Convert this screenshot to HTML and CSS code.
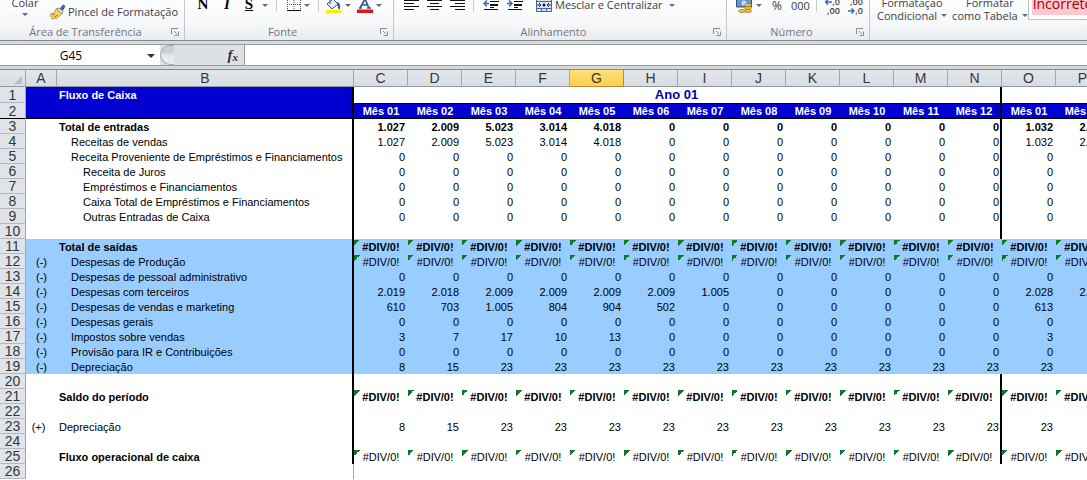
FILE: index.html
```html
<!DOCTYPE html>
<html lang="pt-BR">
<head>
<meta charset="utf-8">
<title>Fluxo de Caixa</title>
<link rel="stylesheet" href="styles.css">
</head>
<body>
<header class="ribbon">
  <section class="group clipboard">
    <div class="tools">
      <button class="stack paste">Colar<i class="arrow"></i></button>
      <button class="tool painter">
        <svg width="16" height="16" viewBox="0 0 16 16"><path d="M10 5l3-4 2 1-2 4z" fill="#4a62b0" stroke="#2c3c80" stroke-width=".7"/><path d="M6 5l3-1 4 3-1 3z" fill="#e8e4d8" stroke="#777" stroke-width=".8"/><path d="M6 5l6 5-5 4-5 1-2-5 4-1z" fill="#f5d76a" stroke="#b98a24" stroke-width=".8"/><path d="M2 11l3-1m-1 3l4-2" stroke="#a87a1c" fill="none"/></svg>
        Pincel de Formatação</button>
    </div>
    <div class="caption"><h2>Área de Transferência</h2><button class="launch" aria-label="Área de Transferência"><svg width="8" height="8" viewBox="0 0 8 8"><path d="M.5 6V.5H7M3 3l3 3M7.500 3.500v4h-4" fill="none" stroke="#848b95"/></svg></button></div>
  </section>
  <section class="group font">
    <div class="tools">
      <button class="glyph bold">N</button>
      <button class="glyph italic">I</button>
      <button class="glyph under">S</button><i class="arrow"></i>
      <i class="rule first"></i>
      <button class="tool" aria-label="Bordas"><svg width="14" height="12" viewBox="0 0 14 12"><path d="M.5 0v10M7 0v10M13.500 0v10M0 4.500h14" stroke="#555" stroke-dasharray="1 1" fill="none"/><path d="M0 10.500h14" stroke="#111"/></svg></button><i class="arrow"></i>
      <i class="rule"></i>
      <button class="tool" aria-label="Cor de preenchimento"><svg width="17" height="14" viewBox="0 0 17 14"><path d="M2 4l6-5 5 5-6 5z" fill="#e7edf8" stroke="#40567f"/><path d="M5 0v4" stroke="#40567f"/><path d="M12 2q4 1 3 7-1 1-2-1z" fill="#2d5cae"/><path d="M1 10h15v3H1z" fill="#ffee00"/></svg></button><i class="arrow"></i>
      <button class="tool" aria-label="Cor da fonte"><svg width="16" height="14" viewBox="0 0 16 14"><path d="M3 8l5-9 4 9M5 5h6M2 8h3M10 8h4" fill="none" stroke="#36558f" stroke-width="1.700"/><path d="M0 9.500h16V13H0z" fill="#e3121b"/></svg></button><i class="arrow"></i>
    </div>
    <div class="caption"><h2>Fonte</h2><button class="launch" aria-label="Fonte"><svg width="8" height="8" viewBox="0 0 8 8"><path d="M.5 6V.5H7M3 3l3 3M7.500 3.500v4h-4" fill="none" stroke="#848b95"/></svg></button></div>
  </section>
  <section class="group align">
    <div class="tools">
      <button class="tool" aria-label="Alinhar à esquerda"><svg width="15" height="12" viewBox="0 0 15 12"><path d="M0 .5h15M0 3.500h10M0 6.500h15M0 9.500h10" stroke="#111"/></svg></button>
      <button class="tool" aria-label="Centralizar"><svg width="15" height="12" viewBox="0 0 15 12"><path d="M0 .5h15M3 3.500h9M0 6.500h15M3 9.500h9" stroke="#111"/></svg></button>
      <button class="tool" aria-label="Alinhar à direita"><svg width="15" height="12" viewBox="0 0 15 12"><path d="M0 .5h15M5 3.500h10M0 6.500h15M5 9.500h10" stroke="#111"/></svg></button>
      <i class="rule"></i>
      <button class="tool" aria-label="Diminuir recuo"><svg width="16" height="12" viewBox="0 0 16 12"><path d="M7 1.500h9M7 4.500h8M7 5.500h8M7 7.500h4M1 9.500h14" stroke="#111"/><path d="M1 3.500h5M4 .5l-3 3 3 3" stroke="#3a68b0" stroke-width="1.500" fill="none"/></svg></button>
      <button class="tool" aria-label="Aumentar recuo"><svg width="16" height="12" viewBox="0 0 16 12"><path d="M7 1.500h9M7 4.500h8M7 5.500h8M7 7.500h4M1 9.500h14" stroke="#111"/><path d="M0 3.500h5M2 .5l3 3-3 3" stroke="#3a68b0" stroke-width="1.500" fill="none"/></svg></button>
      <button class="tool merge">
        <svg width="16" height="14" viewBox="0 0 16 14"><path d="M.5-3h15v14.500H.5z" fill="#dce6f5" stroke="#48629a"/><path d="M.5 1.500h15M.5 8.500h15M5.500 8.500v3M10.500 8.500v3" stroke="#48629a"/><path d="M1 5h4M11 5h4M3 3l2 2-2 2M13 3l-2 2 2 2" stroke="#1c2f60" fill="none"/><circle cx="8" cy="5" r="1.500" fill="#222"/></svg>
        Mesclar e Centralizar</button><i class="arrow"></i>
    </div>
    <div class="caption"><h2>Alinhamento</h2><button class="launch" aria-label="Alinhamento"><svg width="8" height="8" viewBox="0 0 8 8"><path d="M.5 6V.5H7M3 3l3 3M7.500 3.500v4h-4" fill="none" stroke="#848b95"/></svg></button></div>
  </section>
  <section class="group number">
    <div class="tools">
      <button class="tool" aria-label="Formato de contabilização"><svg width="17" height="15" viewBox="0 0 17 15"><path d="M.5-2h15v9H.5z" fill="#6f93cb" stroke="#2e4f8c"/><circle cx="8" cy="3" r="2.500" fill="#cddcf3"/><g fill="#f3c93c" stroke="#98701a" stroke-width=".7"><ellipse cx="12" cy="5" rx="3.500" ry="1.500"/><ellipse cx="12" cy="8" rx="3.500" ry="1.500"/><ellipse cx="12" cy="11" rx="3.500" ry="1.500"/><ellipse cx="6" cy="11" rx="3.500" ry="1.500"/></g></svg></button><i class="arrow"></i>
      <button class="tool percent">%</button>
      <button class="tool zeros">000</button>
      <i class="rule"></i>
      <button class="decimal"><span><svg width="7" height="6" viewBox="0 0 7 6"><path d="M0 3h7M3 .5L.5 3 3 5.500" fill="none" stroke="#3a68b0" stroke-width="1.500"/></svg>,0</span><span>,00</span></button>
      <button class="decimal"><span>,00</span><span><svg width="7" height="6" viewBox="0 0 7 6"><path d="M0 3h6M3.500 .5L6 3 3.500 5.500" fill="none" stroke="#3a68b0" stroke-width="1.500"/></svg>,0</span></button>
    </div>
    <div class="caption"><h2>Número</h2><button class="launch" aria-label="Número"><svg width="8" height="8" viewBox="0 0 8 8"><path d="M.5 6V.5H7M3 3l3 3M7.500 3.500v4h-4" fill="none" stroke="#848b95"/></svg></button></div>
  </section>
  <section class="group styles">
    <div class="tools">
      <button class="stack">Formatação<span>Condicional <i class="arrow"></i></span></button>
      <button class="stack">Formatar<span>como Tabela <i class="arrow"></i></span></button>
      <div class="gallery"><button class="bad">Incorreto</button></div>
    </div>
  </section>
</header>

<div class="formula-bar">
  <input class="name-box" aria-label="Caixa de nome" value="G45">
  <button class="drop" aria-label="Nomes"><i class="arrow"></i></button>
  <div class="functions"><i class="knob"></i><button class="fx" aria-label="Inserir função">f<sub>x</sub></button></div>
  <input class="formula" aria-label="Barra de fórmulas">
</div>

<main class="sheet">
<table>
<colgroup><col class="c-head"><col class="c-a"><col class="c-b"><col span="14" class="c-month"></colgroup>
<thead>
<tr><th class="corner"><svg width="8" height="8" viewBox="0 0 8 8"><path d="M8 0v8H0z" fill="#b9bec6"/></svg></th><th>A<th class="b">B<th>C<th>D<th>E<th>F<th class="selected">G<th>H<th>I<th>J<th>K<th>L<th>M<th>N<th>O<th>P</tr>
</thead>
<tbody>
<tr class="title"><th>1<td class="blue"><td class="blue name b">Fluxo de Caixa<td colspan="12" class="year n">Ano 01<td><td></tr>
<tr class="months"><th>2<td><td class="b"><td>Mês 01<td>Mês 02<td>Mês 03<td>Mês 04<td>Mês 05<td>Mês 06<td>Mês 07<td>Mês 08<td>Mês 09<td>Mês 10<td>Mês 11<td class="n">Mês 12<td>Mês 01<td>Mês 02</tr>
<tr class="strong"><th>3<td><td class="b">Total de entradas<td>1.027<td>2.009<td>5.023<td>3.014<td>4.018<td>0<td>0<td>0<td>0<td>0<td>0<td class="n">0<td>1.032<td>2.018</tr>
<tr><th>4<td><td class="b in1">Receitas de vendas<td>1.027<td>2.009<td>5.023<td>3.014<td>4.018<td>0<td>0<td>0<td>0<td>0<td>0<td class="n">0<td>1.032<td>2.018</tr>
<tr><th>5<td><td class="b in1">Receita Proveniente de Empréstimos e Financiamentos<td>0<td>0<td>0<td>0<td>0<td>0<td>0<td>0<td>0<td>0<td>0<td class="n">0<td>0<td>0</tr>
<tr><th>6<td><td class="b in2">Receita de Juros<td>0<td>0<td>0<td>0<td>0<td>0<td>0<td>0<td>0<td>0<td>0<td class="n">0<td>0<td>0</tr>
<tr><th>7<td><td class="b in2">Empréstimos e Financiamentos<td>0<td>0<td>0<td>0<td>0<td>0<td>0<td>0<td>0<td>0<td>0<td class="n">0<td>0<td>0</tr>
<tr><th>8<td><td class="b in2">Caixa Total de Empréstimos e Financiamentos<td>0<td>0<td>0<td>0<td>0<td>0<td>0<td>0<td>0<td>0<td>0<td class="n">0<td>0<td>0</tr>
<tr><th>9<td><td class="b in2">Outras Entradas de Caixa<td>0<td>0<td>0<td>0<td>0<td>0<td>0<td>0<td>0<td>0<td>0<td class="n">0<td>0<td>0</tr>
<tr><th>10<td><td class="b"><td><td><td><td><td><td><td><td><td><td><td><td class="n"><td><td></tr>
<tr class="out strong error"><th>11<td><td class="b">Total de saídas<td>#DIV/0!<td>#DIV/0!<td>#DIV/0!<td>#DIV/0!<td>#DIV/0!<td>#DIV/0!<td>#DIV/0!<td>#DIV/0!<td>#DIV/0!<td>#DIV/0!<td>#DIV/0!<td>#DIV/0!<td>#DIV/0!<td>#DIV/0!</tr>
<tr class="out error"><th>12<td>(-)<td class="b in1">Despesas de Produção<td>#DIV/0!<td>#DIV/0!<td>#DIV/0!<td>#DIV/0!<td>#DIV/0!<td>#DIV/0!<td>#DIV/0!<td>#DIV/0!<td>#DIV/0!<td>#DIV/0!<td>#DIV/0!<td>#DIV/0!<td>#DIV/0!<td>#DIV/0!</tr>
<tr class="out"><th>13<td>(-)<td class="b in1">Despesas de pessoal administrativo<td>0<td>0<td>0<td>0<td>0<td>0<td>0<td>0<td>0<td>0<td>0<td>0<td>0<td>0</tr>
<tr class="out"><th>14<td>(-)<td class="b in1">Despesas com terceiros<td>2.019<td>2.018<td>2.009<td>2.009<td>2.009<td>2.009<td>1.005<td>0<td>0<td>0<td>0<td>0<td>2.028<td>2.028</tr>
<tr class="out"><th>15<td>(-)<td class="b in1">Despesas de vendas e marketing<td>610<td>703<td>1.005<td>804<td>904<td>502<td>0<td>0<td>0<td>0<td>0<td>0<td>613<td>706</tr>
<tr class="out"><th>16<td>(-)<td class="b in1">Despesas gerais<td>0<td>0<td>0<td>0<td>0<td>0<td>0<td>0<td>0<td>0<td>0<td>0<td>0<td>0</tr>
<tr class="out"><th>17<td>(-)<td class="b in1">Impostos sobre vendas<td>3<td>7<td>17<td>10<td>13<td>0<td>0<td>0<td>0<td>0<td>0<td>0<td>3<td>7</tr>
<tr class="out"><th>18<td>(-)<td class="b in1">Provisão para IR e Contribuições<td>0<td>0<td>0<td>0<td>0<td>0<td>0<td>0<td>0<td>0<td>0<td>0<td>0<td>0</tr>
<tr class="out"><th>19<td>(-)<td class="b in1">Depreciação<td>8<td>15<td>23<td>23<td>23<td>23<td>23<td>23<td>23<td>23<td>23<td>23<td>23<td>23</tr>
<tr><th>20<td><td class="b"><td><td><td><td><td><td><td><td><td><td><td><td class="n"><td><td></tr>
<tr class="strong error"><th>21<td><td class="b">Saldo do período<td>#DIV/0!<td>#DIV/0!<td>#DIV/0!<td>#DIV/0!<td>#DIV/0!<td>#DIV/0!<td>#DIV/0!<td>#DIV/0!<td>#DIV/0!<td>#DIV/0!<td>#DIV/0!<td class="n">#DIV/0!<td>#DIV/0!<td>#DIV/0!</tr>
<tr><th>22<td><td class="b"><td><td><td><td><td><td><td><td><td><td><td><td class="n"><td><td></tr>
<tr><th>23<td class="plus">(+)<td class="b">Depreciação<td>8<td>15<td>23<td>23<td>23<td>23<td>23<td>23<td>23<td>23<td>23<td class="n">23<td>23<td>23</tr>
<tr><th>24<td><td class="b"><td><td><td><td><td><td><td><td><td><td><td><td class="n"><td><td></tr>
<tr class="error"><th>25<td><td class="b"><b>Fluxo operacional de caixa</b><td>#DIV/0!<td>#DIV/0!<td>#DIV/0!<td>#DIV/0!<td>#DIV/0!<td>#DIV/0!<td>#DIV/0!<td>#DIV/0!<td>#DIV/0!<td>#DIV/0!<td>#DIV/0!<td class="n">#DIV/0!<td>#DIV/0!<td>#DIV/0!</tr>
<tr class="last"><th>26<td><td class="b"><td><td><td><td><td><td><td><td><td><td><td><td><td><td></tr>
</tbody>
</table>
</main>
</body>
</html>
```

FILE: styles.css
```css
* { box-sizing: border-box; }
body {
  margin: 0;
  overflow: hidden;
  background: #fff;
  font-family: "Liberation Sans", Arial, sans-serif;
  font-size: 11px;
  color: #000;
}
button, input {
  margin: 0;
  padding: 0;
  border: 0;
  background: none;
  font: inherit;
  color: inherit;
}
svg { display: block; flex: none; }

/* Ribbon */
.ribbon {
  display: flex;
  background: linear-gradient(#fdfdfe, #f6f7f9 60%, #e9ecf0);
  border-bottom: 1px solid #868b91;
  font-family: "Open Sans", "Noto Sans", sans-serif;
  font-size: 11px;
  color: #3b3f45;
}
.group {
  display: flex;
  flex-direction: column;
  flex: none;
  border-right: 1px solid #c3c7cd;
}
.clipboard { width: 185px; }
.font { width: 209px; }
.align { width: 333px; }
.number { width: 143px; }
.styles { flex: 1; border-right: 0; }
.tools {
  display: flex;
  align-items: flex-start;
  height: 24px;
  overflow: hidden;
  white-space: nowrap;
}
.caption {
  display: flex;
  align-items: center;
  height: 16px;
  padding-right: 5px;
}
.caption h2 {
  flex: 1;
  margin: 0;
  font-size: 11px;
  font-weight: 400;
  line-height: 16px;
  text-align: center;
  color: #6f7680;
}
.tool { display: flex; align-items: flex-start; }
.arrow {
  display: inline-block;
  flex: none;
  border: 3px solid transparent;
  border-top-color: #666b73;
  border-bottom: 0;
}
.tools > .arrow { margin-top: 4px; }
.rule { width: 1px; height: 12px; background: #c9cdd3; }
.stack {
  display: flex;
  flex-direction: column;
  align-items: center;
  line-height: 13px;
  margin-top: -4px;
}
.stack span { display: flex; align-items: center; gap: 4px; }
.paste { width: 50px; gap: 4px; }
.painter { gap: 2px; padding-top: 4px; line-height: 16px; }
.font .tools { padding-left: 6px; }
.glyph {
  width: 24px;
  margin-top: -5px;
  font-family: "Liberation Serif", serif;
  font-size: 15px;
  line-height: 18px;
  color: #000;
}
.bold { font-weight: 700; }
.italic { font-style: italic; font-weight: 700; }
.under { font-weight: 700; text-decoration: underline; width: 20px; }
.font .arrow { margin-left: 3px; }
.font .rule { margin: 0 6px 0 8px; }
.font .first { margin: 0 10px 0 8px; }
.font .arrow + .tool { margin-left: 6px; }
.align .tools { padding-left: 10px; gap: 8px; }
.align .rule { margin: 0 1px 0 0; }
.merge { gap: 3px; line-height: 10px; margin-left: 5px; }
.merge + .arrow { margin-left: -2px; }
.number .tools { padding-left: 9px; }
.number .arrow { margin-left: 3px; }
.percent, .zeros { font-size: 12px; line-height: 11px; }
.percent { margin-left: 10px; }
.zeros { margin: 0 6px 0 9px; font-size: 11px; }
.decimal {
  display: flex;
  flex-direction: column;
  align-items: flex-end;
  margin: -3px 0 0 6px;
  font-size: 9px;
  font-weight: 600;
  line-height: 9px;
  width: 17px;
}
.decimal span { display: flex; align-items: center; }
.styles .tools { padding-left: 7px; }
.styles .stack + .stack { margin-left: 5px; }
.gallery {
  flex: 1;
  height: 20px;
  margin-left: 0;
  padding: 0 0 4px 3px;
  border: 1px solid #b9bfc7;
  border-top: 0;
  border-right: 0;
  background: #fff;
  overflow: hidden;
}
.bad {
  width: 100%;
  height: 15px;
  padding-left: 1px;
  background: #ffc7ce;
  color: #9c0006;
  font-size: 14px;
  line-height: 7px;
  text-align: left;
  vertical-align: top;
  padding-bottom: 8px;
}

/* Formula bar */
.formula-bar {
  display: flex;
  align-items: stretch;
  height: 29px;
  padding: 3px 0;
  background: #d5d9de;
  border-bottom: 1px solid #85898f;
}
.formula-bar > * { border-top: 1px solid #989da4; border-bottom: 1px solid #989da4; }
.name-box { width: 142px; background: #fff; font-family: "Open Sans", sans-serif; font-size: 12px; text-align: center; }
.drop { width: 18px; background: #fff; }
.drop .arrow { border-width: 4px 4px 0; border-top-color: #333; vertical-align: middle; }
.functions {
  display: flex;
  align-items: center;
  justify-content: space-between;
  width: 85px;
  padding-right: 6px;
  background: #dde1e6;
  border-right: 1px solid #989da4;
}
.knob {
  width: 14px;
  height: 20px;
  border: 1px solid #a6abb2;
  border-right: 0;
  border-radius: 10px 0 0 10px;
  background: linear-gradient(#ccd1d7 35%, #e6e9ed 55%);
}
.fx { font-family: "Liberation Serif", serif; font-size: 15px; font-style: italic; font-weight: 700; line-height: 16px; color: #333; }
.fx sub { font-size: 11px; line-height: 1px; vertical-align: -1px; }
.formula { flex: 1; min-width: 0; background: #fff; }

/* Worksheet */
.sheet { overflow: hidden; }
table { table-layout: fixed; width: 0; border-collapse: separate; border-spacing: 0; }
.c-head { width: 26px; }
.c-a { width: 31px; }
.c-b { width: 297px; }
.c-month { width: 54px; }
th, td { height: 15px; padding: 0; line-height: 14px; white-space: nowrap; }
th {
  background: #e0e3e8;
  border-right: 1px solid #a3a8b0;
  border-bottom: 1px solid #b4b8bf;
  font-size: 14px;
  font-weight: 400;
  color: #33373d;
}
thead th { height: 17px; line-height: 16px; background: linear-gradient(#e3e6eb, #d9dde3); border-bottom-color: #9298a0; }
thead .selected { background: linear-gradient(#ffdf78, #fbd050); border-color: #c08a2c; }
.corner svg { margin: 4px 0 0 14px; }
td { padding-right: 3px; text-align: right; }
td:nth-child(2) { padding: 0; text-align: center; }
tr td.plus { padding-right: 6px; }
td.b { padding: 0 0 0 2px; border-right: 2px solid #000; text-align: left; }
td.in1 { padding-left: 14px; }
td.in2 { padding-left: 26px; }
td.n { padding-right: 1px; border-right: 2px solid #000; }
.title th, .title td { height: 16px; }
.title .blue { background: #0000d0; }
.title .name { color: #fff; font-weight: 700; }
.title .year { text-align: center; font-size: 13px; font-weight: 700; color: #0000a8; }
.months th, .months td { height: 16px; border-bottom: 1px solid #000; }
.months td { background: #0000d0; color: #fff; font-weight: 700; }
.months td:nth-child(n+4) { padding: 0; border-top: 1px solid #000; text-align: center; }
.strong td { font-weight: 700; }
.out td { background-color: #99ccff; }
.error td:nth-child(n+4) {
  padding: 0;
  text-align: center;
  background-image: linear-gradient(135deg, #0c7a28 50%, transparent 50%);
  background-repeat: no-repeat;
  background-position: 0 1px;
  background-size: 6px 6px;
}
.last td.b { border-right: 1px solid #a3a8b0; }
```
